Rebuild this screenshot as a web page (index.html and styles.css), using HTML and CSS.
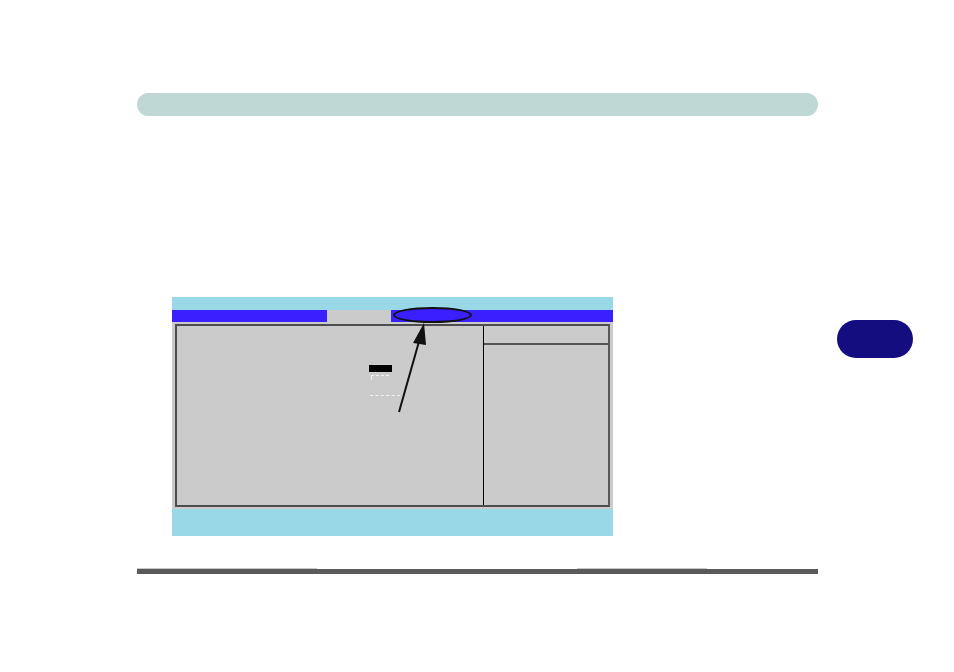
FILE: index.html
```html
<!DOCTYPE html>
<html>
<head>
<meta charset="utf-8">
<link rel="stylesheet" href="styles.css">
</head>
<body>
<div class="page">
  <div class="header-bar"></div>
  <div class="content-row">
    <div class="bios">
      <div class="bios-top"></div>
      <div class="bios-menu">
        <div class="menu-blue menu-left"></div>
        <div class="menu-tab"></div>
        <div class="menu-blue menu-right"></div>
      </div>
      <div class="bios-body">
        <div class="bios-frame">
          <div class="panel-main">
            <div class="sel-block"></div>
            <div class="frag frag-1"></div>
            <div class="frag frag-2"></div>
          </div>
          <div class="panel-help">
            <div class="help-head"></div>
            <div class="help-body"></div>
          </div>
        </div>
      </div>
      <div class="bios-foot"></div>
      <div class="callout-ellipse"></div>
    </div>
    <div class="side">
      <div class="chapter-badge"></div>
    </div>
  </div>
  <div class="footer-rule">
    <span class="seg seg-a"></span>
    <span class="seg seg-b"></span>
    <span class="seg seg-c"></span>
    <span class="seg seg-d"></span>
    <span class="seg seg-e"></span>
  </div>
  <svg class="arrow" width="954" height="672" viewBox="0 0 954 672">
    <line x1="399" y1="412" x2="420" y2="338" stroke="#111" stroke-width="2"/>
    <polygon points="424,323 413,343 426,345" fill="#111"/>
  </svg>
</div>
</body>
</html>
```
FILE: styles.css
```css
html, body {
  margin: 0;
  padding: 0;
  background: #ffffff;
  font-family: "Liberation Sans", Arial, sans-serif;
}

.page {
  position: relative;
  width: 954px;
  height: 672px;
  overflow: hidden;
}

.header-bar {
  margin: 93px 0 0 137px;
  width: 681px;
  height: 23px;
  border-radius: 12px;
  background: #c0d8d5;
}

.content-row {
  display: flex;
  margin-top: 181px;
  margin-left: 172px;
}

.bios {
  position: relative;
  width: 441px;
  display: flex;
  flex-direction: column;
}

.bios-top {
  height: 13px;
  background: #99d8e6;
}

.bios-menu {
  display: flex;
  height: 12px;
}

.menu-blue {
  background: #3b20ff;
}

.menu-left {
  width: 155px;
}

.menu-tab {
  width: 64px;
  background: #cbcbcb;
}

.menu-right {
  flex: 1;
}

.bios-body {
  background: #cbcbcb;
  padding: 2px 3px 2px 3px;
  height: 183px;
}

.bios-frame {
  display: flex;
  height: 100%;
  box-sizing: border-box;
  border: 2px solid #4d4d4d;
  border-right-color: #5a5a5a;
}

.panel-main {
  position: relative;
  width: 306px;
  border-right: 1px solid #000;
}

.panel-help {
  flex: 1;
  display: flex;
  flex-direction: column;
}

.help-head {
  height: 17px;
  border-bottom: 2px solid #555;
}

.help-body {
  flex: 1;
}

.sel-block {
  position: absolute;
  left: 192px;
  top: 39px;
  width: 23px;
  height: 7px;
  background: #000;
}

.frag {
  position: absolute;
  border-top: 1px dashed #f2f2f2;
}

.frag-1 {
  left: 194px;
  top: 49px;
  width: 17px;
  height: 4px;
  border-left: 1px solid #eee;
}

.frag-2 {
  left: 193px;
  top: 67px;
  width: 30px;
  height: 2px;
  border-top: none;
  border-bottom: 1px dashed #f2f2f2;
}

.bios-foot {
  height: 27px;
  background: #99d8e6;
}

.callout-ellipse {
  position: absolute;
  left: 221px;
  top: 10px;
  width: 79px;
  height: 16px;
  box-sizing: border-box;
  border: 2px solid #111;
  border-radius: 50%;
  background: #3b20ff;
}

.side {
  padding-left: 224px;
  padding-top: 23px;
}

.chapter-badge {
  width: 76px;
  height: 38px;
  border-radius: 19px;
  background: #140d80;
}

.footer-rule {
  display: flex;
  margin: 32px 0 0 137px;
  width: 681px;
  height: 6px;
  align-items: flex-start;
}

.seg {
  display: block;
  height: 5px;
  background: #5a5a5a;
}

.seg-a {
  width: 180px;
  border-top: 1px solid #c8c8c8;
  height: 5px;
}

.seg-b {
  width: 130px;
  margin-top: 1px;
}

.seg-c {
  width: 130px;
  height: 5px;
  margin-top: 1px;
}

.seg-d {
  width: 130px;
  border-top: 1px solid #c8c8c8;
}

.seg-e {
  flex: 1;
  margin-top: 1px;
}

.arrow {
  position: absolute;
  left: 0;
  top: 0;
  pointer-events: none;
}
```
